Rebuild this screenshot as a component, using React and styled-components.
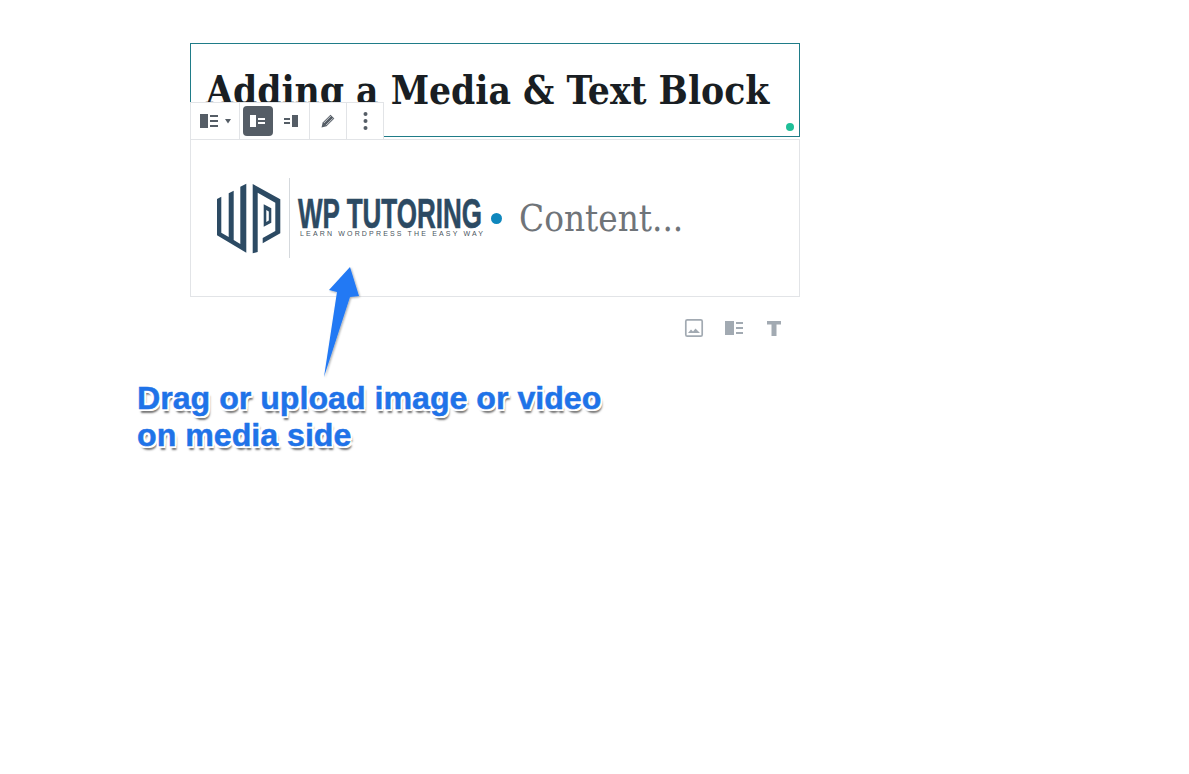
import React from "react";
import styled, { createGlobalStyle } from "styled-components";

const Global = createGlobalStyle`
  html, body { margin: 0; background: #fff; }
`;

const App = () => (
  <Page>
    <Global />
    <Editor>
      <TitleBlock>
        <Title>Adding a Media &amp; Text Block</Title>
        <GreenDot />
        <Toolbar>
          <Group>
            <ToolButton $wide>
              <svg width="32" height="16" viewBox="-1 0 32 16">
                <rect x="0" y="1" width="8" height="14" fill="#555d66" />
                <path d="M10 3h8M10 8h8M10 13h8" stroke="#555d66" strokeWidth="2" />
                <path d="M25 6h6l-3 4.500z" fill="#555d66" />
              </svg>
            </ToolButton>
          </Group>
          <Group>
            <ToolButton $active>
              <svg width="16" height="14" viewBox="0 0 16 14">
                <rect x="0" y="1" width="6" height="12" fill="#fff" />
                <path d="M8 5h7M8 9h7" stroke="#fff" strokeWidth="2" />
              </svg>
            </ToolButton>
            <ToolButton>
              <svg width="16" height="14" viewBox="0 0 16 14">
                <rect x="9" y="1" width="6" height="12" fill="#555d66" />
                <path d="M1 5h6M1 9h6" stroke="#555d66" strokeWidth="2" />
              </svg>
            </ToolButton>
          </Group>
          <Group>
            <ToolButton>
              <svg width="16" height="16" viewBox="0 0 16 16">
                <path d="M1.500 14.500l1.200-5L10.500 1.700l3.800 3.800L6.500 13.300z" fill="#555d66" />
                <path d="M3.800 10L10.800 3M6 12.200l7-7" stroke="#fff" strokeWidth="0.700" />
              </svg>
            </ToolButton>
          </Group>
          <Group $last>
            <ToolButton>
              <svg width="5" height="20" viewBox="0 0 5 20">
                <circle cx="2.500" cy="3" r="2" fill="#555d66" />
                <circle cx="2.500" cy="10" r="2" fill="#555d66" />
                <circle cx="2.500" cy="17" r="2" fill="#555d66" />
              </svg>
            </ToolButton>
          </Group>
        </Toolbar>
      </TitleBlock>

      <MediaBlock>
        <Logo viewBox="0 0 280 84" width="280" height="84">
          <path d="M5 23L9.300 20.700V56.700L16.700 61V17.300L21.700 14.700V64L28.300 68V10.700L34.300 7.700V76.700L5 59.300Z" fill="#2c4a63" />
          <path d="M40.700 8L68.300 23.300V57.300L50.700 67.300V62L63.300 55V26.700L45.700 16.700V76L40.700 77.300Z" fill="#2c4a63" />
          <path d="M51.700 28.300L59.300 32.300V46.700L51.700 50.700ZM54.300 34V46L56.800 44.500V35.500Z" fill="#2c4a63" fillRule="evenodd" />
          <rect x="77" y="2" width="1" height="80" fill="#d5d9dd" />
          <LogoTitle transform="translate(86 52) scale(0.605 1)">WP TUTORING</LogoTitle>
          <LogoTag x="88" y="60" textLength="183" lengthAdjust="spacing">LEARN WORDPRESS THE EASY WAY</LogoTag>
        </Logo>
        <Caret />
        <Content>Content...</Content>
      </MediaBlock>

      <Appender>
        <svg width="20" height="20" viewBox="0 0 20 20" fill="none">
          <rect x="1.800" y="1.800" width="16.400" height="16.400" rx="1.500" stroke="#a2aab2" strokeWidth="1.700" />
          <path d="M4 15l3-3.500 2 2 2.500-3L16 15z" fill="#a2aab2" />
        </svg>
        <svg width="20" height="20" viewBox="0 0 20 20">
          <rect x="1" y="3" width="9" height="14" fill="#a2aab2" />
          <path d="M12 5h7M12 10h7M12 15h7" stroke="#a2aab2" strokeWidth="2" />
        </svg>
        <svg width="20" height="20" viewBox="0 0 20 20">
          <path d="M3 3h14v3.500h-4.500V18h-5V6.500H3z" fill="#a2aab2" />
        </svg>
      </Appender>
    </Editor>

    <Hint>
      Drag or upload image or video
      <br />
      on media side
    </Hint>

    <Arrow width="60" height="130" viewBox="0 0 60 130">
      <defs>
        <filter id="arrowShadow" x="-30%" y="-10%" width="160%" height="120%">
          <feDropShadow dx="1" dy="1" stdDeviation="1" floodColor="#000" floodOpacity="0.35" />
        </filter>
      </defs>
      <path d="M35 2L44 31 35 32 9 112 22 27 14 25z" fill="#2279f4" filter="url(#arrowShadow)" />
    </Arrow>
  </Page>
);

export default App;

const Page = styled.div`
  position: relative;
  padding: 43px 0 0 137px;
  height: 774px;
  box-sizing: border-box;
  overflow: hidden;
`;

const Editor = styled.div`
  width: 610px;
  margin-left: 53px;
`;

const TitleBlock = styled.div`
  position: relative;
  height: 94px;
  box-sizing: border-box;
  border: 1px solid #1f7c88;
`;

const Title = styled.h2`
  margin: 0;
  padding: 22px 0 0 15px;
  font-family: "DejaVu Serif", serif;
  font-stretch: condensed;
  font-weight: 700;
  font-size: 38.55px;
  line-height: 50px;
  color: #191e23;
  white-space: nowrap;
`;

const GreenDot = styled.span`
  position: absolute;
  right: 5px;
  bottom: 5px;
  width: 8px;
  height: 8px;
  border-radius: 50%;
  background: #1fbf98;
`;

const Toolbar = styled.div`
  position: absolute;
  left: -1px;
  top: 58px;
  display: flex;
  height: 38px;
  box-sizing: border-box;
  background: #fff;
  border: 1px solid #e2e4e7;
`;

const Group = styled.div`
  display: flex;
  align-items: center;
  gap: 3px;
  padding: 0 3px;
  border-right: ${(p) => (p.$last ? "none" : "1px solid #e2e4e7")};
`;

const ToolButton = styled.div`
  display: flex;
  align-items: center;
  justify-content: center;
  width: ${(p) => (p.$wide ? "42px" : "30px")};
  height: 30px;
  border-radius: 4px;
  background: ${(p) => (p.$active ? "#555d66" : "transparent")};
`;

const MediaBlock = styled.div`
  display: flex;
  align-items: center;
  height: 158px;
  box-sizing: border-box;
  margin-top: 2px;
  padding-left: 21px;
  border: 1px solid #e2e4e7;
`;

const Logo = styled.svg`
  flex: none;
`;

const LogoTitle = styled.text`
  font-family: "Liberation Sans", sans-serif;
  font-weight: 700;
  font-size: 43px;
  fill: #2c4a63;
  stroke: #2c4a63;
  stroke-width: 0.6;
`;

const LogoTag = styled.text`
  font-family: "Liberation Sans", sans-serif;
  font-size: 7px;
  fill: #4a5560;
`;

const Caret = styled.span`
  flex: none;
  width: 11px;
  height: 11px;
  border-radius: 50%;
  margin-left: -1px;
  background: #0f87bd;
`;

const Content = styled.div`
  margin-left: 17px;
  font-family: "DejaVu Serif", serif;
  font-stretch: condensed;
  font-size: 36.5px;
  color: #6f7479;
`;

const Appender = styled.div`
  display: flex;
  justify-content: flex-end;
  gap: 20px;
  padding: 21px 16px 0 0;
`;

const Hint = styled.div`
  margin-top: 42px;
  font-family: "Liberation Sans", Arial, sans-serif;
  font-weight: 700;
  font-size: 32.15px;
  line-height: 37px;
  color: #1f73e8;
  -webkit-text-stroke: 0.5px #1f73e8;
  text-shadow: -2px -2px 0 #fff, 2px -2px 0 #fff, -2px 2px 0 #fff, 2px 2px 0 #fff,
    0 -2px 0 #fff, 0 2px 0 #fff, -2px 0 0 #fff, 2px 0 0 #fff,
    2px 4px 2px rgba(0, 0, 0, 0.55);
`;

const Arrow = styled.svg`
  position: absolute;
  left: 315px;
  top: 265px;
`;
